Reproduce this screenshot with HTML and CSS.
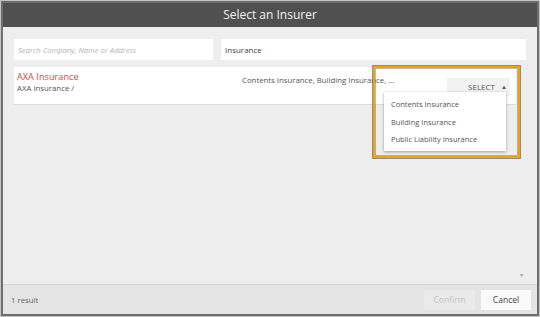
FILE: index.html
```html
<!DOCTYPE html>
<html>
<head>
    <meta charset="utf-8">
    <link rel="stylesheet" href="styles.css">
</head>
<body>
    <div class="dialog">
        <div class="dialog-header">Select an Insurer</div>

        <div class="dialog-body">
            <div class="search-row">
                <input class="search-input search-company" type="text" placeholder="Search Company, Name or Address">
                <input class="search-input search-type" type="text" value="Insurance">
            </div>

            <div class="result-list">
                <div class="result-item">
                    <div class="result-name">
                        <div class="company">AXA Insurance</div>
                        <div class="branch">AXA Insurance /</div>
                    </div>
                    <div class="result-types">Contents Insurance, Building Insurance, ...</div>
                    <div class="select-wrap">
                        <button class="select-button">SELECT <span class="caret">&#9650;</span></button>
                        <ul class="select-menu">
                            <li>Contents Insurance</li>
                            <li>Building Insurance</li>
                            <li>Public Liability Insurance</li>
                        </ul>
                    </div>
                    <div class="highlight"></div>
                </div>
                <div class="scroll-down">&#9660;</div>
            </div>
        </div>

        <div class="dialog-footer">
            <span class="result-count">1 result</span>
            <div class="footer-buttons">
                <button class="btn btn-confirm" disabled>Confirm</button>
                <button class="btn btn-cancel">Cancel</button>
            </div>
        </div>
    </div>
</body>
</html>
```

FILE: styles.css
```css
body {
    margin: 0;
    background-color: #c4c4c4;
    font-family: 'Open Sans', 'Noto Sans', sans-serif;
}

/* ===== ventana ===== */
.dialog {
    margin: 1px;
    height: 311px;
    border: 2px solid #6e6e6e;
    background-color: #eeeeee;
    display: flex;
    flex-direction: column;
}

.dialog-header {
    background-color: #505050;
    color: #f2f2f2;
    text-align: center;
    font-size: 12px;
    height: 24px;
    line-height: 24px;
}

.dialog-body {
    flex: 1;
    padding: 12px 11px 0 11px;
    display: flex;
    flex-direction: column;
}

/* ===== busqueda ===== */
.search-row {
    display: flex;
    gap: 8px;
}

.search-input {
    border: none;
    background-color: #ffffff;
    height: 21px;
    padding: 0 4px;
    font-family: 'Open Sans', 'Noto Sans', sans-serif;
    font-size: 8px;
    color: #444444;
    box-sizing: border-box;
    outline: none;
}

.search-input::placeholder {
    color: #b4b4b4;
    font-style: italic;
    font-size: 7.6px;
}

.search-company {
    width: 199px;
}

.search-type {
    flex: 1;
}

/* ===== resultados ===== */
.result-list {
    flex: 1;
    margin-top: 7px;
    padding-right: 10px;
    position: relative;
}

.result-item {
    position: relative;
    background-color: #ffffff;
    height: 37px;
    display: flex;
    align-items: flex-start;
    border-bottom: 1px solid #dddddd;
}

.result-name {
    padding: 4px 0 0 3px;
    width: 225px;
}

.company {
    color: #f24141;
    font-size: 9.2px;
    line-height: 12px;
}

.branch {
    color: #555555;
    font-size: 7.8px;
    line-height: 11px;
}

.result-types {
    font-size: 7.8px;
    color: #555555;
    padding-top: 8px;
    width: 205px;
}

.select-wrap {
    position: relative;
    margin-top: 6px;
}

.select-button {
    border: none;
    background-color: #f2f2f2;
    color: #555555;
    font-family: 'Open Sans', 'Noto Sans', sans-serif;
    font-size: 8px;
    width: 63px;
    height: 18px;
    text-align: right;
    padding: 0 3px 0 0;
}

.caret {
    font-size: 6px;
    margin-left: 4px;
    vertical-align: 1px;
}

.select-menu {
    position: absolute;
    top: 19px;
    right: 4px;
    width: 122px;
    margin: 0;
    padding: 4px 0 2px 0;
    list-style: none;
    background-color: #ffffff;
    box-shadow: 0 1px 3px rgba(0, 0, 0, 0.35);
    z-index: 2;
}

.select-menu li {
    font-size: 7.5px;
    color: #555555;
    padding: 0 7px;
    line-height: 17.5px;
}

.highlight {
    position: absolute;
    left: 359px;
    top: -1px;
    width: 143px;
    height: 88px;
    border: 2px solid #f5a300;
    box-shadow: 0 0 0 1px rgba(60, 60, 60, 0.55), inset 0 0 0 1px rgba(60, 60, 60, 0.35);
    z-index: 3;
}

.scroll-down {
    position: absolute;
    right: 2px;
    bottom: 6px;
    font-size: 5px;
    color: #9a9a9a;
}

/* ===== pie ===== */
.dialog-footer {
    border-top: 1px solid #d4d4d4;
    background-color: #e4e4e4;
    height: 29px;
    display: flex;
    align-items: center;
    justify-content: space-between;
    padding: 0 6px 0 8px;
}

.result-count {
    font-size: 7.8px;
    color: #666666;
}

.footer-buttons {
    display: flex;
    gap: 6px;
}

.btn {
    border: none;
    height: 20px;
    width: 51px;
    font-family: 'Open Sans', 'Noto Sans', sans-serif;
    font-size: 8.5px;
}

.btn-confirm {
    background-color: #eaeaea;
    color: #c4c4c4;
}

.btn-cancel {
    background-color: #fafafa;
    color: #444444;
    width: 50px;
}
```
